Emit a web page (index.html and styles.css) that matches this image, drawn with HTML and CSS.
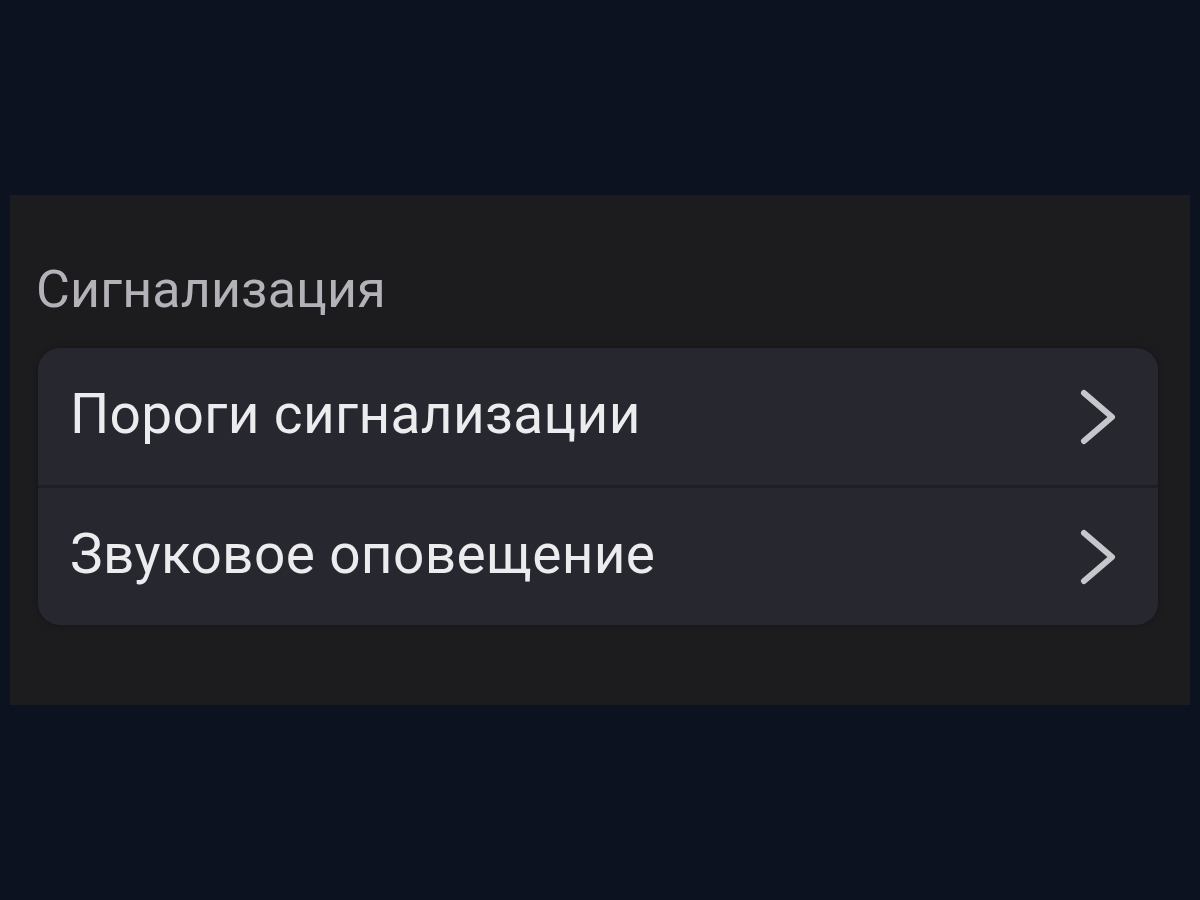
FILE: index.html
```html
<!DOCTYPE html>
<html lang="ru">
<head>
<meta charset="utf-8">
<link rel="stylesheet" href="styles.css">
</head>
<body>
<div class="page">
  <section class="panel">
    <h2 class="section-title">Сигнализация</h2>
    <div class="card">
      <div class="row">
        <span class="label">Пороги сигнализации</span>
        <svg class="chev" width="40" height="58" viewBox="0 0 40 58"><path d="M6 5 L34 29 L6 53" fill="none" stroke="#c6c6cb" stroke-width="6" stroke-linecap="round" stroke-linejoin="round"/></svg>
      </div>
      <div class="divider"></div>
      <div class="row">
        <span class="label">Звуковое оповещение</span>
        <svg class="chev" width="40" height="58" viewBox="0 0 40 58"><path d="M6 5 L34 29 L6 53" fill="none" stroke="#c6c6cb" stroke-width="6" stroke-linecap="round" stroke-linejoin="round"/></svg>
      </div>
    </div>
  </section>
</div>
</body>
</html>
```
FILE: styles.css
```css
html, body {
  margin: 0;
  padding: 0;
  background: #0c1220;
  width: 1200px;
  height: 900px;
  overflow: hidden;
}
.page {
  padding: 195px 10px 0 10px;
}
.panel {
  background: #1c1c1f;
  height: 510px;
  box-sizing: border-box;
  padding: 65px 32px 0 28px;
  font-family: Roboto, "Noto Sans", sans-serif;
}
.section-title {
  margin: 0 0 28px -2px;
  font-weight: 400;
  font-size: 52px;
  line-height: 60px;
  color: #b2b2b8;
  letter-spacing: 0.15px;
}
.card {
  background: #272730;
  border-radius: 22px;
  overflow: hidden;
  box-shadow: 0 0 6px rgba(0, 0, 0, 0.25);
}
.row {
  height: 137px;
  display: flex;
  align-items: center;
  justify-content: space-between;
  padding: 0 40px 0 32px;
}
.label {
  font-size: 55px;
  letter-spacing: 0.35px;
  color: #ececee;
  padding-bottom: 6px;
}
.divider {
  height: 3px;
  background: #1e1e24;
}
.chev {
  display: block;
}
```
